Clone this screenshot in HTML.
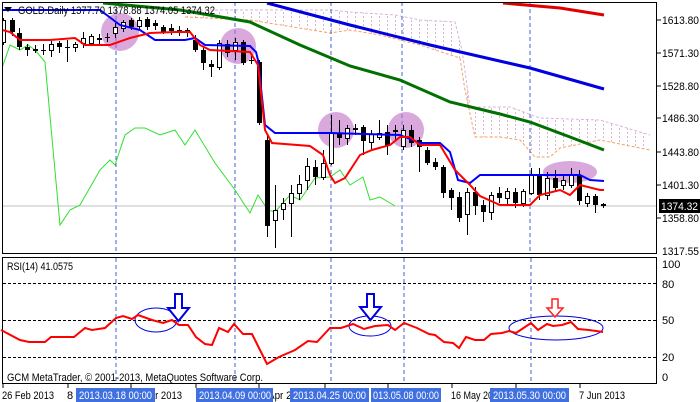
<!DOCTYPE html>
<html><head><meta charset="utf-8"><style>
html,body{margin:0;padding:0;background:#fff;}
svg{display:block;font-family:"Liberation Sans",sans-serif;}
</style></head><body>
<svg width="700" height="402" viewBox="0 0 700 402" xmlns="http://www.w3.org/2000/svg">
<defs>
<pattern id="hatch" width="8" height="4" patternUnits="userSpaceOnUse">
<rect x="3" y="0" width="1" height="2" fill="#d8b4d8"/>
</pattern>
<clipPath id="main"><rect x="2" y="2" width="655" height="252"/></clipPath>
</defs>
<rect width="700" height="402" fill="#fff"/>
<g clip-path="url(#main)">
<polygon fill="url(#hatch)" points="185,10 330,10 350,12 395,15 420,20 455,22 462,50 470,107 510,107 540,118 600,120 650,135 650,150 600,140 560,148 550,157 535,157 520,140 500,137 475,137 465,90 460,58 420,45 380,35 350,30 330,33 250,20 185,17"/>
<polyline fill="none" stroke="#d8b4d8" stroke-width="1" stroke-dasharray="3,2" points="185,10 330,10 350,12 395,15 420,20 455,22 462,50 470,107 510,107 540,118 600,120 650,135"/>
<polyline fill="none" stroke="#f4a060" stroke-width="1" stroke-dasharray="3,2" points="185,17 250,20 330,33 350,30 380,35 420,45 460,58 465,90 475,137 500,137 520,140 535,157 550,157 560,148 600,140 650,150"/>
<g stroke="#4060d0" stroke-width="1" stroke-dasharray="4,3">
<line x1="116" y1="2" x2="116" y2="254"/><line x1="235" y1="2" x2="235" y2="254"/><line x1="331" y1="2" x2="331" y2="254"/><line x1="402" y1="2" x2="402" y2="254"/><line x1="530" y1="2" x2="530" y2="254"/>
</g>
<line x1="2" y1="206" x2="657" y2="206" stroke="#c0c0c0"/>
<g fill="#c070c8" fill-opacity="0.6">
<circle cx="120" cy="32" r="19"/><circle cx="238" cy="46" r="18"/><circle cx="336" cy="130" r="18"/><circle cx="406" cy="130" r="18"/><ellipse cx="570" cy="172" rx="27" ry="11"/>
</g>
<polyline fill="none" stroke="#e00000" stroke-width="3" points="503,3 560,8 604,15"/>
<polyline fill="none" stroke="#0000e0" stroke-width="3" points="267,3 350,25 430,45 530,68 604,89"/>
<polyline fill="none" stroke="#007000" stroke-width="3" points="103,3 180,10 250,22 300,45 350,66 400,80 450,102 500,114 530,122 570,137 604,150"/>
<polyline fill="none" stroke="#30e030" stroke-width="1" points="2,68 10,45 20,50 28,45 35,50 45,62 60,225 70,210 80,205 100,170 110,160 115,165 125,135 135,128 145,128 160,135 175,130 185,145 195,130 215,163 235,190 250,213 258,195 268,210 275,212 290,195 300,200 315,178 330,177 340,170 350,185 363,177 370,200 380,197 395,206"/>
<path fill="none" stroke="#000" stroke-width="1" d="M3.5,18V45M12.5,18V36M19.5,28V50M27.5,44V56M35.5,45V53M43.5,44V55M51.5,41V57M59.5,41V53M67.5,40V62M75.5,42V52M83.5,32V48M91.5,34V46M99.5,34V46M107.5,33V42M115.5,23V38M123.5,20V32M131.5,18V30M139.5,17V29M147.5,17V30M155.5,20V30M163.5,25V34M171.5,24V35M179.5,26V36M187.5,28V37M195.5,35V52M203.5,46V70M211.5,60V77M219.5,40V70M227.5,40V57M235.5,38V60M243.5,40V65M251.5,56V64M259.5,60V125M267.5,135V237M275.5,185V248M283.5,198V220M291.5,185V237M299.5,175V200M307.5,158V190M315.5,160V185M323.5,150V180M331.5,115V165M339.5,120V145M347.5,125V145M355.5,124V135M363.5,125V155M371.5,130V150M379.5,120V140M387.5,125V155M395.5,125V140M403.5,125V150M411.5,125V147M419.5,137V172M427.5,147V165M435.5,158V170M443.5,165V198M451.5,188V210M459.5,192V222M467.5,188V235M475.5,187V215M483.5,200V222M491.5,192V220M499.5,187V203M507.5,188V205M515.5,188V208M523.5,189V207M531.5,168V195M539.5,168V200M547.5,172V200M555.5,170V192M563.5,175V190M571.5,168V188M579.5,170V205M587.5,193V207M595.5,194V213M603.5,203V208"/>
<g fill="#000">
<rect x="10" y="20" width="5" height="12"/><rect x="17" y="33" width="5" height="14"/><rect x="25" y="47" width="5" height="3"/><rect x="33" y="49" width="5" height="2"/><rect x="41" y="50" width="5" height="1"/><rect x="57" y="43" width="5" height="4"/><rect x="65" y="47" width="5" height="1"/><rect x="97" y="38" width="5" height="2"/><rect x="105" y="37" width="5" height="1"/><rect x="129" y="20" width="5" height="7"/><rect x="145" y="19" width="5" height="8"/><rect x="153" y="23" width="5" height="3"/><rect x="161" y="27" width="5" height="5"/><rect x="169" y="28" width="5" height="3"/><rect x="177" y="30" width="5" height="3"/><rect x="185" y="30" width="5" height="3"/><rect x="193" y="40" width="5" height="10"/><rect x="201" y="50" width="5" height="13"/><rect x="209" y="64" width="5" height="3"/><rect x="225" y="44" width="5" height="9"/><rect x="241" y="42" width="5" height="21"/><rect x="249" y="60" width="5" height="1"/><rect x="257" y="62" width="5" height="61"/><rect x="265" y="140" width="5" height="86"/><rect x="313" y="167" width="5" height="10"/><rect x="337" y="133" width="5" height="5"/><rect x="353" y="128" width="5" height="2"/><rect x="361" y="127" width="5" height="14"/><rect x="385" y="132" width="5" height="14"/><rect x="393" y="130" width="5" height="2"/><rect x="409" y="130" width="5" height="13"/><rect x="417" y="140" width="5" height="7"/><rect x="425" y="150" width="5" height="13"/><rect x="433" y="162" width="5" height="5"/><rect x="441" y="167" width="5" height="26"/><rect x="449" y="190" width="5" height="8"/><rect x="457" y="197" width="5" height="21"/><rect x="473" y="192" width="5" height="14"/><rect x="481" y="205" width="5" height="7"/><rect x="497" y="193" width="5" height="5"/><rect x="513" y="192" width="5" height="11"/><rect x="537" y="176" width="5" height="19"/><rect x="553" y="178" width="5" height="10"/><rect x="577" y="175" width="5" height="26"/><rect x="593" y="196" width="5" height="9"/><rect x="601" y="204" width="5" height="2"/>
</g>
<g fill="#fff" stroke="#000" stroke-width="1">
<rect x="1.5" y="20.5" width="4" height="22"/><rect x="49.5" y="44.5" width="4" height="6"/><rect x="73.5" y="44.5" width="4" height="3"/><rect x="81.5" y="38.5" width="4" height="5"/><rect x="89.5" y="36.5" width="4" height="7"/><rect x="113.5" y="27.5" width="4" height="6"/><rect x="121.5" y="22.5" width="4" height="6"/><rect x="137.5" y="20.5" width="4" height="6"/><rect x="217.5" y="43.5" width="4" height="24"/><rect x="233.5" y="42.5" width="4" height="8"/><rect x="273.5" y="210.5" width="4" height="10"/><rect x="281.5" y="203.5" width="4" height="6"/><rect x="289.5" y="193.5" width="4" height="10"/><rect x="297.5" y="184.5" width="4" height="9"/><rect x="305.5" y="166.5" width="4" height="14"/><rect x="321.5" y="163.5" width="4" height="14"/><rect x="329.5" y="133.5" width="4" height="30"/><rect x="345.5" y="128.5" width="4" height="10"/><rect x="369.5" y="134.5" width="4" height="8"/><rect x="377.5" y="133.5" width="4" height="4"/><rect x="401.5" y="130.5" width="4" height="16"/><rect x="465.5" y="192.5" width="4" height="22"/><rect x="489.5" y="195.5" width="4" height="17"/><rect x="505.5" y="191.5" width="4" height="7"/><rect x="521.5" y="191.5" width="4" height="12"/><rect x="529.5" y="175.5" width="4" height="18"/><rect x="545.5" y="178.5" width="4" height="17"/><rect x="561.5" y="180.5" width="4" height="5"/><rect x="569.5" y="175.5" width="4" height="10"/><rect x="585.5" y="196.5" width="4" height="7"/>
</g>
<polyline fill="none" stroke="#0000ff" stroke-width="2" points="2,10 10,10 100,10 120,25 140,30 155,40 185,40 195,38 205,45 250,46 256,52 258,60 265,125 275,133 330,133 400,135 420,143 440,143 450,152 458,180 470,183 480,175 500,175 580,175 590,180 604,181"/>
<polyline fill="none" stroke="#ff0000" stroke-width="2" points="2,30 10,32 20,40 50,40 75,38 85,45 110,45 130,38 150,33 175,32 190,32 200,45 210,50 250,52 258,65 265,130 272,143 310,146 323,155 330,175 335,183 345,178 360,155 372,150 390,145 400,137 410,137 420,145 440,145 455,170 470,185 480,196 500,205 530,205 540,195 560,190 570,195 580,185 600,190 604,190"/>
</g>
<polygon points="4,7 12,7 8,12" fill="#000"/>
<text x="18" y="14" font-size="11" fill="#000" textLength="197" lengthAdjust="spacingAndGlyphs">GOLD.Daily  1377.70 1378.88 1374.05 1374.32</text>
<rect x="2.5" y="2.5" width="654" height="251" fill="none" stroke="#000"/>
<rect x="2.5" y="257.5" width="654" height="126" fill="none" stroke="#000"/>
<g font-size="11" fill="#000">
<text x="662" y="24" textLength="37" lengthAdjust="spacingAndGlyphs">1613.80</text><text x="662" y="57" textLength="37" lengthAdjust="spacingAndGlyphs">1571.30</text><text x="662" y="90" textLength="37" lengthAdjust="spacingAndGlyphs">1528.80</text><text x="662" y="122" textLength="37" lengthAdjust="spacingAndGlyphs">1486.30</text><text x="662" y="156" textLength="37" lengthAdjust="spacingAndGlyphs">1443.80</text><text x="662" y="189" textLength="37" lengthAdjust="spacingAndGlyphs">1401.30</text><text x="662" y="222" textLength="37" lengthAdjust="spacingAndGlyphs">1358.80</text><text x="662" y="255" textLength="37" lengthAdjust="spacingAndGlyphs">1317.55</text>
</g>
<g stroke="#000"><line x1="657" y1="20" x2="661" y2="20"/><line x1="657" y1="53" x2="661" y2="53"/><line x1="657" y1="86" x2="661" y2="86"/><line x1="657" y1="118" x2="661" y2="118"/><line x1="657" y1="152" x2="661" y2="152"/><line x1="657" y1="185" x2="661" y2="185"/><line x1="657" y1="218" x2="661" y2="218"/></g>
<rect x="659" y="199" width="41" height="14" fill="#000"/>
<text x="661" y="210" font-size="11" fill="#fff" textLength="37" lengthAdjust="spacingAndGlyphs">1374.32</text>
<g stroke="#4060d0" stroke-width="1" stroke-dasharray="4,3">
<line x1="116" y1="258" x2="116" y2="384"/><line x1="235" y1="258" x2="235" y2="384"/><line x1="331" y1="258" x2="331" y2="384"/><line x1="404" y1="258" x2="404" y2="384"/><line x1="531" y1="258" x2="531" y2="384"/>
</g>
<g stroke="#000" stroke-dasharray="3,2"><line x1="3" y1="283.5" x2="656" y2="283.5"/><line x1="3" y1="320.5" x2="656" y2="320.5"/><line x1="3" y1="357.5" x2="656" y2="357.5"/></g>
<g fill="none" stroke="#0000e0" stroke-width="1">
<ellipse cx="156" cy="320" rx="21" ry="12"/><ellipse cx="370" cy="326" rx="21" ry="10"/><ellipse cx="556" cy="328" rx="47" ry="12"/>
</g>
<polyline fill="none" stroke="#ff0000" stroke-width="2" points="1,330 20,340 29,342 45,342 51,337 74,337 85,328 92,330 105,328 116,318 123,316 132,319 138,315 152,320 163,323 172,320 179,325 188,325 196,337 205,344 212,345 219,328 228,332 234,324 243,334 252,334 259,348 267,364 279,357 295,350 308,341 317,342 330,328 341,328 353,324 364,329 375,326 388,325 395,330 404,323 417,328 429,334 435,335 444,342 453,343 459,348 466,337 475,340 484,340 491,334 502,333 509,331 516,333 531,323 538,330 547,324 553,326 562,325 571,322 578,329 589,330 603,332"/>
<polygon points="175,294 182,294 182,308 189,308 178.5,321 168,308 175,308" fill="#fff" stroke="#0000e0" stroke-width="2"/>
<polygon points="367,294 374,294 374,307 381,307 370.5,320 360,307 367,307" fill="#fff" stroke="#0000e0" stroke-width="2"/>
<polygon points="552,299 558,299 558,308 563,308 555,317 547,308 552,308" fill="#fff" stroke="#ff2020" stroke-width="1.5"/>
<text x="7" y="270" font-size="11" fill="#000" textLength="66" lengthAdjust="spacingAndGlyphs">RSI(14) 41.0575</text>
<text x="7" y="381" font-size="11" fill="#000" textLength="256" lengthAdjust="spacingAndGlyphs">GCM MetaTrader, © 2001-2013, MetaQuotes Software Corp.</text>
<g font-size="11" fill="#000">
<text x="662" y="268">100</text><text x="662" y="288">80</text><text x="662" y="324">50</text><text x="662" y="361">20</text><text x="662" y="381">0</text>
</g>
<g stroke="#000"><line x1="3" y1="384" x2="3" y2="388"/><line x1="68" y1="384" x2="68" y2="388"/><line x1="131" y1="384" x2="131" y2="388"/><line x1="196" y1="384" x2="196" y2="388"/><line x1="259" y1="384" x2="259" y2="388"/><line x1="325" y1="384" x2="325" y2="388"/><line x1="388" y1="384" x2="388" y2="388"/><line x1="452" y1="384" x2="452" y2="388"/><line x1="516" y1="384" x2="516" y2="388"/><line x1="580" y1="384" x2="580" y2="388"/></g>
<g font-size="11" fill="#000">
<text x="2" y="399" textLength="52" lengthAdjust="spacingAndGlyphs">26 Feb 2013</text><text x="67" y="399">8</text><text x="142" y="399" textLength="40" lengthAdjust="spacingAndGlyphs">Mar 2013</text><text x="268" y="399" textLength="40" lengthAdjust="spacingAndGlyphs">Apr 2013</text><text x="451" y="399" textLength="52" lengthAdjust="spacingAndGlyphs">16 May 2013</text><text x="579" y="399" textLength="46" lengthAdjust="spacingAndGlyphs">7 Jun 2013</text>
</g>
<g fill="#4070e0">
<rect x="76" y="388" width="79" height="14"/><rect x="196" y="388" width="77" height="14"/><rect x="290" y="388" width="79" height="14"/><rect x="371" y="388" width="70" height="14"/><rect x="490" y="388" width="79" height="14"/>
</g>
<g font-size="11" fill="#fff">
<text x="79" y="399" textLength="73" lengthAdjust="spacingAndGlyphs">2013.03.18 00:00</text><text x="199" y="399" textLength="72" lengthAdjust="spacingAndGlyphs">2013.04.09 00:00</text><text x="293" y="399" textLength="73" lengthAdjust="spacingAndGlyphs">2013.04.25 00:00</text><text x="373" y="399" textLength="66" lengthAdjust="spacingAndGlyphs">013.05.08 00:00</text><text x="493" y="399" textLength="73" lengthAdjust="spacingAndGlyphs">2013.05.30 00:00</text>
</g>
</svg>
</body></html>
